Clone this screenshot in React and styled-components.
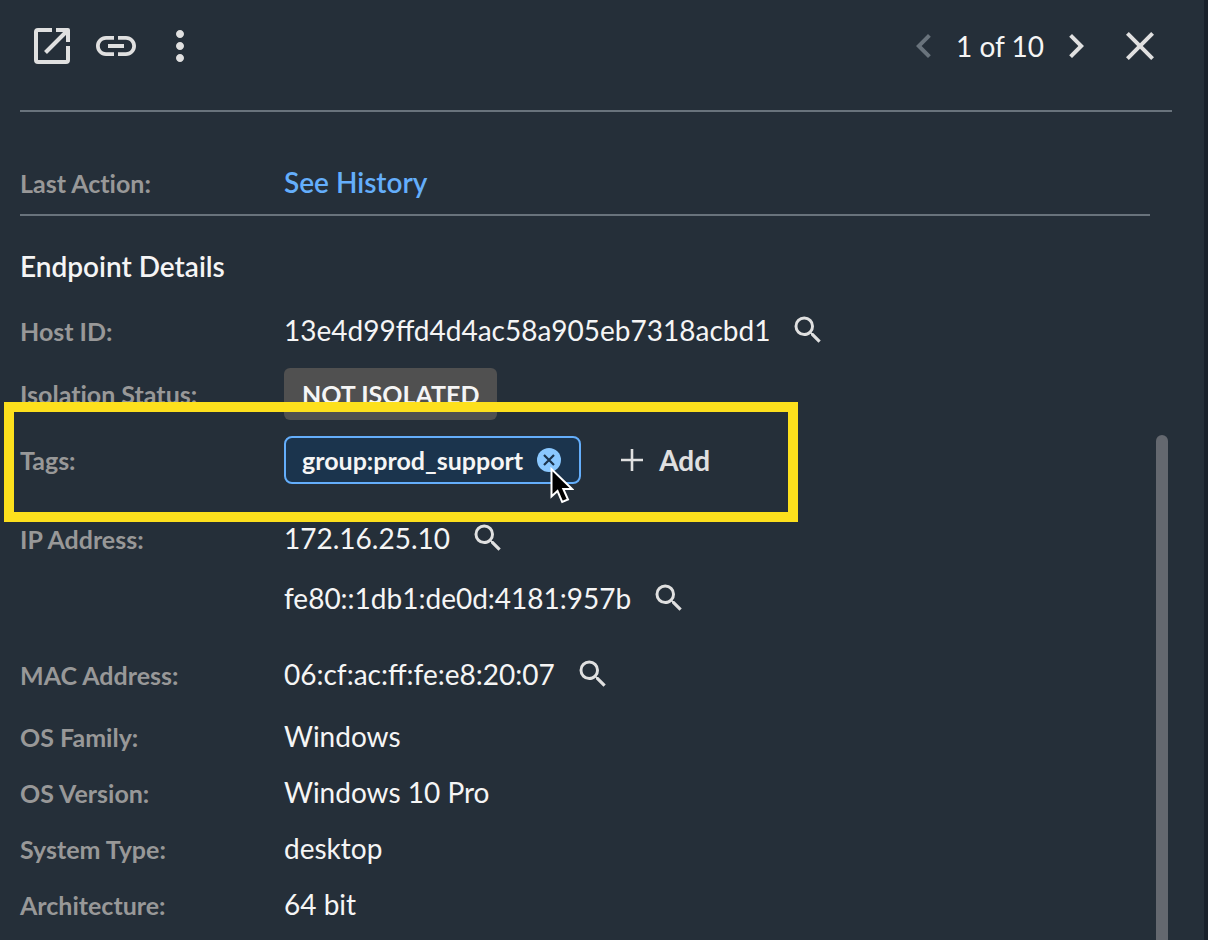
import React from "react";
import styled, { createGlobalStyle } from "styled-components";
import {
	MdChevronLeft,
	MdChevronRight,
	MdClose,
	MdLink,
	MdMoreVert,
	MdSearch,
} from "react-icons/md";

const App = () => {
	return (
		<>
			<GlobalStyle />
			<Panel>
				<Header>
					<Group $gap={16}>
						<IconButton type="button" aria-label="Open in new window">
							<OpenIcon />
						</IconButton>
						<IconButton type="button" aria-label="Copy link">
							<MdLink />
						</IconButton>
						<IconButton type="button" aria-label="More actions">
							<MdMoreVert />
						</IconButton>
					</Group>
					<Group $gap={16}>
						<Group $gap={8}>
							<IconButton type="button" aria-label="Previous" disabled>
								<MdChevronLeft />
							</IconButton>
							<Count>1 of 10</Count>
							<IconButton type="button" aria-label="Next">
								<MdChevronRight />
							</IconButton>
						</Group>
						<IconButton type="button" aria-label="Close">
							<MdClose />
						</IconButton>
					</Group>
				</Header>
				<Body>
					<Content>
						<LastAction>
							<Label>Last Action:</Label>
							<Value>
								<HistoryLink href="#history">See History</HistoryLink>
							</Value>
						</LastAction>
						<Title>Endpoint Details</Title>
						<List>
							<Row>
								<Label>Host ID:</Label>
								<Lookup text="13e4d99ffd4d4ac58a905eb7318acbd1" />
							</Row>
							<Row>
								<Label>Isolation Status:</Label>
								<Value>
									<Badge>NOT ISOLATED</Badge>
								</Value>
							</Row>
							<TagsRow>
								<Label>Tags:</Label>
								<Value>
									<Chip>
										<span>group:prod_support</span>
										<RemoveButton type="button" aria-label="Remove tag">
											<RemoveIcon />
											<Cursor />
										</RemoveButton>
									</Chip>
									<AddButton type="button">
										<PlusIcon />
										Add
									</AddButton>
								</Value>
							</TagsRow>
							<Row $top={16}>
								<Label>IP Address:</Label>
								<Values>
									<Lookup text="172.16.25.10" />
									<Lookup text="fe80::1db1:de0d:4181:957b" />
								</Values>
							</Row>
							<Row $top={16}>
								<Label>MAC Address:</Label>
								<Lookup text="06:cf:ac:ff:fe:e8:20:07" />
							</Row>
							<Row $top={4}>
								<Label>OS Family:</Label>
								<Value>Windows</Value>
							</Row>
							<Row>
								<Label>OS Version:</Label>
								<Value>Windows 10 Pro</Value>
							</Row>
							<Row>
								<Label>System Type:</Label>
								<Value>desktop</Value>
							</Row>
							<Row>
								<Label>Architecture:</Label>
								<Value>64 bit</Value>
							</Row>
						</List>
					</Content>
					<Track>
						<Thumb />
					</Track>
				</Body>
			</Panel>
		</>
	);
};

export default App;

const Lookup = ({ text }) => (
	<LookupValue>
		<span>{text}</span>
		<SearchButton type="button" aria-label={`Search ${text}`}>
			<MdSearch />
		</SearchButton>
	</LookupValue>
);

const OpenIcon = () => (
	<svg viewBox="0 0 48 48" fill="none" stroke="currentColor" strokeWidth="4">
		<path d="M24 8H10a2 2 0 0 0-2 2v28a2 2 0 0 0 2 2h28a2 2 0 0 0 2-2V24" />
		<path d="M17.5 30.500L39 9" />
		<path d="M28 6h12a2 2 0 0 1 2 2v12h-4v-7l-3-3h-7z" fill="currentColor" stroke="none" />
	</svg>
);

const RemoveIcon = () => (
	<svg viewBox="0 0 24 24">
		<circle cx="12" cy="12" r="12" fill="#8ac8ff" />
		<path d="M7 7l10 10M17 7L7 17" stroke="#1b344d" strokeWidth="2.2" />
	</svg>
);

const PlusIcon = () => (
	<svg viewBox="0 0 22 22" fill="none" stroke="currentColor" strokeWidth="2.6">
		<path d="M11 0v22M0 11h22" />
	</svg>
);

const Cursor = () => (
	<Pointer viewBox="0 0 24 38" aria-hidden="true">
		<path
			d="M1.500 3v27.500l6-5.500 4.700 11 5.800-2.500-4.700-10.500H22z"
			fill="#000"
			stroke="#fff"
			strokeWidth="2"
		/>
	</Pointer>
);

const GlobalStyle = createGlobalStyle`
	*,
	*::before,
	*::after {
		box-sizing: border-box;
	}
	body {
		margin: 0;
		background: #252f39;
		color: #f5f5f5;
		font-family: Lato, "Liberation Sans", sans-serif;
		font-size: 28px;
		line-height: 40px;
	}
	button {
		display: flex;
		align-items: center;
		padding: 0;
		border: 0;
		background: none;
		color: #e0e0e0;
		font: inherit;
		cursor: pointer;
	}
	svg {
		display: block;
		flex: none;
	}
`;

const Panel = styled.main`
	display: flex;
	flex-direction: column;
	min-height: 100vh;
	padding: 0 32px 0 20px;
	border-right: 4px solid #19212b;
`;

const Header = styled.header`
	display: flex;
	justify-content: space-between;
	padding: 22px 8px 40px;
	border-bottom: 2px solid #69737c;
`;

const Group = styled.div`
	display: flex;
	align-items: center;
	gap: ${({ $gap }) => $gap}px;
`;

const IconButton = styled.button`
	svg {
		width: 48px;
		height: 48px;
	}
	&:disabled {
		color: #69737c;
		cursor: default;
	}
`;

const Count = styled.span`
	white-space: nowrap;
`;

const Body = styled.div`
	display: flex;
	flex: 1;
	gap: 6px;
	padding-right: 4px;
`;

const Content = styled.div`
	flex: 1;
	min-width: 0;
`;

const Track = styled.div`
	display: flex;
	flex-direction: column;
	width: 12px;
	&::before {
		content: "";
		flex: 39;
	}
`;

const Thumb = styled.div`
	flex: 61;
	border-radius: 6px 6px 0 0;
	background: #64686f;
`;

const Row = styled.div`
	display: flex;
	align-items: baseline;
	margin-top: ${({ $top = 0 }) => $top}px;
	padding: 8px 0;
`;

const LastAction = styled.dl`
	display: flex;
	align-items: baseline;
	margin: 0;
	padding: 50px 0 12px;
	border-bottom: 2px solid #69737c;
`;

const TagsRow = styled(Row)`
	position: relative;
	&::after {
		content: "";
		position: absolute;
		top: -26px;
		bottom: -30px;
		left: -16px;
		width: 794px;
		border: 10px solid #fde01d;
		pointer-events: none;
	}
`;

const Title = styled.h2`
	margin: 30px 0 14px;
	font-size: 28px;
	font-weight: 600;
	line-height: 40px;
`;

const List = styled.dl`
	margin: 0;
`;

const Label = styled.dt`
	flex: none;
	width: 264px;
	color: #989898;
	font-size: 25px;
	font-weight: 700;
	font-variant-ligatures: none;
	line-height: 32px;
`;

const Value = styled.dd`
	display: flex;
	align-items: center;
	margin: 0;
`;

const Values = styled.div`
	display: flex;
	flex-direction: column;
	gap: 16px;
`;

const LookupValue = styled(Value)`
	gap: 20px;
	line-height: 44px;
`;

const SearchButton = styled.button`
	svg {
		width: 36px;
		height: 36px;
	}
`;

const HistoryLink = styled.a`
	color: #64aefb;
	font-weight: 600;
	text-decoration: none;
`;

const Badge = styled.span`
	padding: 6px 18px;
	border-radius: 6px;
	background: #505050;
	font-size: 25px;
	font-weight: 700;
`;

const Chip = styled.span`
	display: flex;
	align-items: center;
	gap: 14px;
	padding: 2px 18px 2px 16px;
	border: 2px solid #64aefb;
	border-radius: 8px;
	background: #1b344d;
	font-size: 25px;
	font-weight: 700;
`;

const RemoveButton = styled.button`
	position: relative;
	svg {
		width: 24px;
	}
`;

const Pointer = styled.svg`
	position: absolute;
	z-index: 1;
	top: 18px;
	left: 13px;
	height: 38px;
`;

const AddButton = styled.button`
	gap: 16px;
	margin-left: 40px;
	font-weight: 700;
	svg {
		width: 22px;
	}
`;
